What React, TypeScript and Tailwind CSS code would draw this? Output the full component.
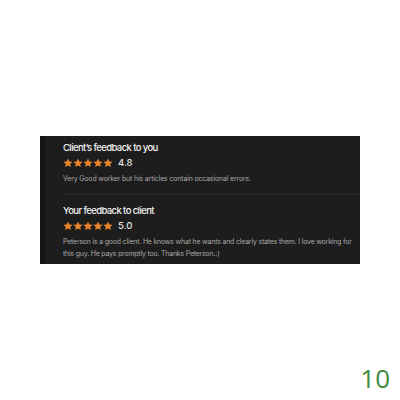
import React from "react";

function Star() {
  return (
    <svg width="10" height="10" viewBox="0 0 24 24" fill="#e8832a">
      <path d="M12 1l3.3 7.1 7.7.8-5.8 5.2 1.7 7.6L12 17.8l-6.9 3.9 1.7-7.6L1 8.9l7.7-.8z" />
    </svg>
  );
}

function Stars({ value }: { value: string }) {
  return (
    <div className="flex items-center">
      <div className="flex gap-[0px]">
        <Star />
        <Star />
        <Star />
        <Star />
        <Star />
      </div>
      <span className="ml-[5px] text-[9.5px] font-medium leading-none text-[#e6e6e6]">{value}</span>
    </div>
  );
}

export default function App() {
  return (
    <div
      className="w-[400px] h-[400px] bg-white flex flex-col"
      style={{ fontFamily: "Inter, 'Liberation Sans', sans-serif" }}
    >
      <div className="mt-[136px] ml-[40px] w-[320px] h-[128px] bg-[#1d1d1d] border-l-[5px] border-[#161616] flex flex-col overflow-hidden">
        <div className="pl-[18px] pt-[6px] h-[58px] flex flex-col">
          <div className="text-[9.5px] font-medium tracking-[-0.6px] text-[#f2f2f2] leading-[12px]">Client’s feedback to you</div>
          <div className="mt-[4px]">
            <Stars value="4.8" />
          </div>
          <div className="mt-[6px] text-[6.9px] tracking-[-0.12px] text-[#a8a8a8] leading-[10px] whitespace-nowrap">
            Very Good worker but his articles contain occasional errors.
          </div>
        </div>
        <div className="ml-[19px] h-px bg-[#2a2a2a]" />
        <div className="pl-[18px] pt-[10px] flex flex-col">
          <div className="text-[9.5px] font-medium tracking-[-0.6px] text-[#f2f2f2] leading-[12px]">Your feedback to client</div>
          <div className="mt-[4px]">
            <Stars value="5.0" />
          </div>
          <div className="mt-[5px] text-[6.9px] tracking-[-0.16px] text-[#a8a8a8] leading-[12px] whitespace-nowrap">
            Peterson is a good client. He knows what he wants and clearly states them. I love working for
            <br />
            this guy. He pays promptly too. Thanks Peterson.:)
          </div>
        </div>
      </div>
      <div className="flex-1" />
      <div className="self-end mr-[10px] mb-[9px] text-[26px] leading-none text-[#3d8b3d]" style={{ fontFamily: "'Open Sans', sans-serif" }}>
        10
      </div>
    </div>
  );
}
